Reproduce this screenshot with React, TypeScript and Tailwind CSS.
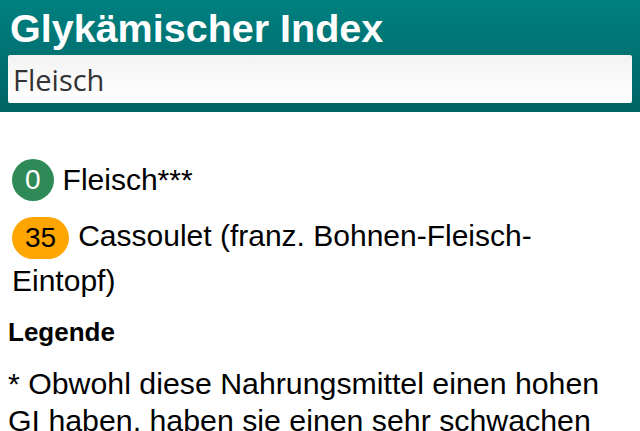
export default function App() {
  return (
    <div className="min-h-screen bg-white font-['Liberation_Sans',Arial,sans-serif] text-black">
      <header className="bg-gradient-to-b from-[#008080] to-[#006464] px-2 pb-[9px] pt-[6px]">
        <h1 className="pl-[2px] text-[39.5px] font-bold leading-[44px] text-white">Glykämischer Index</h1>
        <input
          defaultValue="Fleisch"
          className="mt-[5px] block h-[48px] w-full rounded-[2px] bg-gradient-to-b from-[#f3f3f3] to-white px-[5px] font-['Open_Sans',sans-serif] text-[29px] text-[#333] outline-none"
        />
      </header>
      <main className="px-2 pt-[46px]">
        <ul className="flex flex-col gap-[12px] pl-[4px] text-[30px] leading-[44px]">
          <li>
            <span className="mr-[9px] mt-[1px] inline-block h-[42px] rounded-full bg-[#2e8b57] px-[13px] align-top text-[28px] leading-[42px] text-white">0</span>
            Fleisch***
          </li>
          <li>
            <span className="mr-[9px] mt-[3px] inline-block h-[42px] rounded-full bg-[#ffa500] px-[13px] align-top text-[28px] leading-[42px]">35</span>
            Cassoulet (franz. Bohnen-Fleisch-Eintopf)
          </li>
        </ul>
        <h2 className="mt-[14px] text-[26px] font-bold leading-[30px]">Legende</h2>
        <p className="mt-[18px] text-[30.3px] leading-[37px]">
          * Obwohl diese Nahrungsmittel einen hohen GI haben, haben sie einen sehr schwachen Einfluss auf den Blutzuckerspiegel.
        </p>
      </main>
    </div>
  );
}
